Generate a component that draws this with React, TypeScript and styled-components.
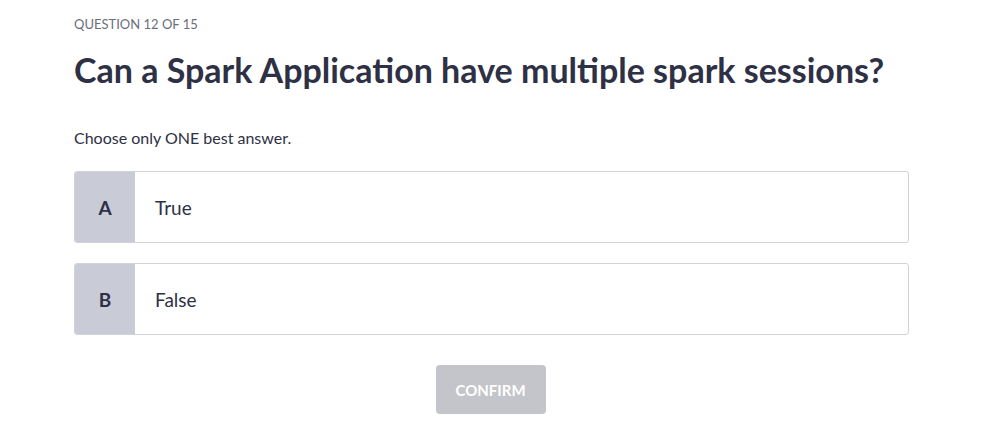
import React from "react";
import styled, { createGlobalStyle } from "styled-components";

const GlobalStyle = createGlobalStyle`
  *, *::before, *::after { box-sizing: border-box; }
  body {
    margin: 0;
    background: #ffffff;
    font-family: "Lato", "Liberation Sans", sans-serif;
    color: #2e3045;
  }
`;

const options = [
  { key: "A", text: "True" },
  { key: "B", text: "False" },
];

export default function App() {
  return (
    <Page>
      <GlobalStyle />
      <Counter>Question 12 of 15</Counter>
      <Title>Can a Spark Application have multiple spark sessions?</Title>
      <Hint>Choose only ONE best answer.</Hint>
      <OptionList>
        {options.map((o) => (
          <Option key={o.key}>
            <Letter>{o.key}</Letter>
            <Answer>{o.text}</Answer>
          </Option>
        ))}
      </OptionList>
      <Actions>
        <ConfirmButton disabled>Confirm</ConfirmButton>
      </Actions>
    </Page>
  );
}

const Page = styled.main`
  width: 909px;
  padding: 16px 0 0 74px;
`;

const Counter = styled.div`
  font-size: 13px;
  line-height: 16px;
  text-transform: uppercase;
  color: #6b6e7a;
`;

const Title = styled.h1`
  margin: 18px 0 0;
  font-size: 34px;
  line-height: 40px;
  font-weight: 700;
  color: #2e3045;
`;

const Hint = styled.p`
  margin: 38px 0 0;
  font-size: 16px;
  line-height: 20px;
  color: #2e3045;
`;

const OptionList = styled.div`
  display: flex;
  flex-direction: column;
  gap: 20px;
  margin-top: 23px;
`;

const Option = styled.div`
  display: flex;
  height: 72px;
  border: 1px solid #d2d1d8;
  border-radius: 3px;
  overflow: hidden;
  background: #ffffff;
  cursor: pointer;
`;

const Letter = styled.div`
  display: flex;
  align-items: center;
  justify-content: center;
  width: 60px;
  flex-shrink: 0;
  background: #c9ccd6;
  font-size: 19px;
  font-weight: 700;
  color: #2e3045;
`;

const Answer = styled.div`
  display: flex;
  align-items: center;
  padding-left: 20px;
  font-size: 19px;
  color: #2e3045;
`;

const Actions = styled.div`
  display: flex;
  justify-content: center;
  margin-top: 30px;
`;

const ConfirmButton = styled.button`
  width: 110px;
  height: 49px;
  margin-left: -2px;
  border: none;
  border-radius: 4px;
  background: #c4c5ca;
  color: #ffffff;
  font-family: inherit;
  font-size: 15px;
  font-weight: 700;
  text-transform: uppercase;
`;
